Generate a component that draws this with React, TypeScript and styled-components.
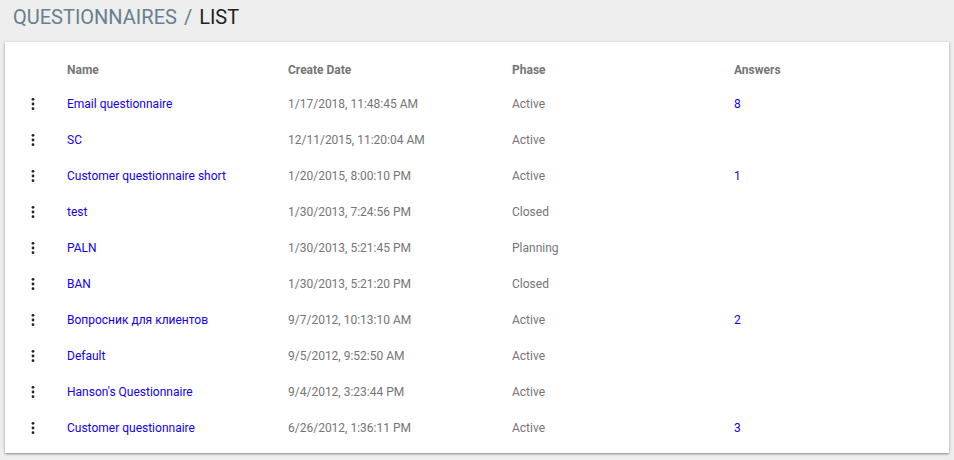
import React from "react";
import styled, { createGlobalStyle } from "styled-components";

const GlobalStyle = createGlobalStyle`
  html, body {
    margin: 0;
    padding: 0;
    background: #eeeeee;
    font-family: Roboto, "Liberation Sans", Arial, sans-serif;
  }
`;

const Page = styled.div`
  width: 954px;
  height: 460px;
  box-sizing: border-box;
  padding: 0 5px 0 5px;
  background: #eeeeee;
  display: flex;
  flex-direction: column;
`;

const Title = styled.h1`
  margin: 0;
  padding: 4px 0 0 8px;
  height: 38px;
  box-sizing: border-box;
  font-size: 20px;
  font-weight: 400;
  line-height: 26px;
  letter-spacing: 0;
  display: flex;
  gap: 7px;
`;

const Crumb = styled.span<{ $current?: boolean }>`
  color: ${(p) => (p.$current ? "#222222" : "#66808f")};
`;

const Card = styled.div`
  background: #ffffff;
  box-shadow: 0 1px 3px rgba(0, 0, 0, 0.3), 0 1px 1px rgba(0, 0, 0, 0.14);
  padding: 16px 0 7px 0;
  margin-top: 4px;
`;

const Row = styled.div<{ $header?: boolean }>`
  display: grid;
  grid-template-columns: 62px 221px 224px 222px 1fr;
  height: ${(p) => (p.$header ? "24px" : "36px")};
  margin-bottom: ${(p) => (p.$header ? "4px" : "0")};
  align-items: center;
  font-size: 12px;
  color: #757575;
  font-weight: ${(p) => (p.$header ? 700 : 400)};
`;

const MenuCell = styled.div`
  display: flex;
  justify-content: flex-start;
  padding-left: 21px;
  color: #222;
`;

const Link = styled.a`
  color: #1200ee;
  text-decoration: none;
  cursor: pointer;
`;

const Kebab = () => (
  <svg width="14" height="14" viewBox="0 0 24 24" fill="#222">
    <circle cx="12" cy="4" r="2.4" />
    <circle cx="12" cy="12" r="2.4" />
    <circle cx="12" cy="20" r="2.4" />
  </svg>
);

const rows = [
  ["Email questionnaire", "1/17/2018, 11:48:45 AM", "Active", "8"],
  ["SC", "12/11/2015, 11:20:04 AM", "Active", ""],
  ["Customer questionnaire short", "1/20/2015, 8:00:10 PM", "Active", "1"],
  ["test", "1/30/2013, 7:24:56 PM", "Closed", ""],
  ["PALN", "1/30/2013, 5:21:45 PM", "Planning", ""],
  ["BAN", "1/30/2013, 5:21:20 PM", "Closed", ""],
  ["Вопросник для клиентов", "9/7/2012, 10:13:10 AM", "Active", "2"],
  ["Default", "9/5/2012, 9:52:50 AM", "Active", ""],
  ["Hanson's Questionnaire", "9/4/2012, 3:23:44 PM", "Active", ""],
  ["Customer questionnaire", "6/26/2012, 1:36:11 PM", "Active", "3"],
];

export default function App() {
  return (
    <>
      <GlobalStyle />
      <Page>
        <Title>
          <Crumb>QUESTIONNAIRES</Crumb>
          <Crumb>/</Crumb>
          <Crumb $current>LIST</Crumb>
        </Title>
        <Card>
          <Row $header>
            <div />
            <div>Name</div>
            <div>Create Date</div>
            <div>Phase</div>
            <div>Answers</div>
          </Row>
          {rows.map((r, i) => (
            <Row key={i}>
              <MenuCell>
                <Kebab />
              </MenuCell>
              <div>
                <Link>{r[0]}</Link>
              </div>
              <div>{r[1]}</div>
              <div>{r[2]}</div>
              <div>{r[3] && <Link>{r[3]}</Link>}</div>
            </Row>
          ))}
        </Card>
      </Page>
    </>
  );
}
